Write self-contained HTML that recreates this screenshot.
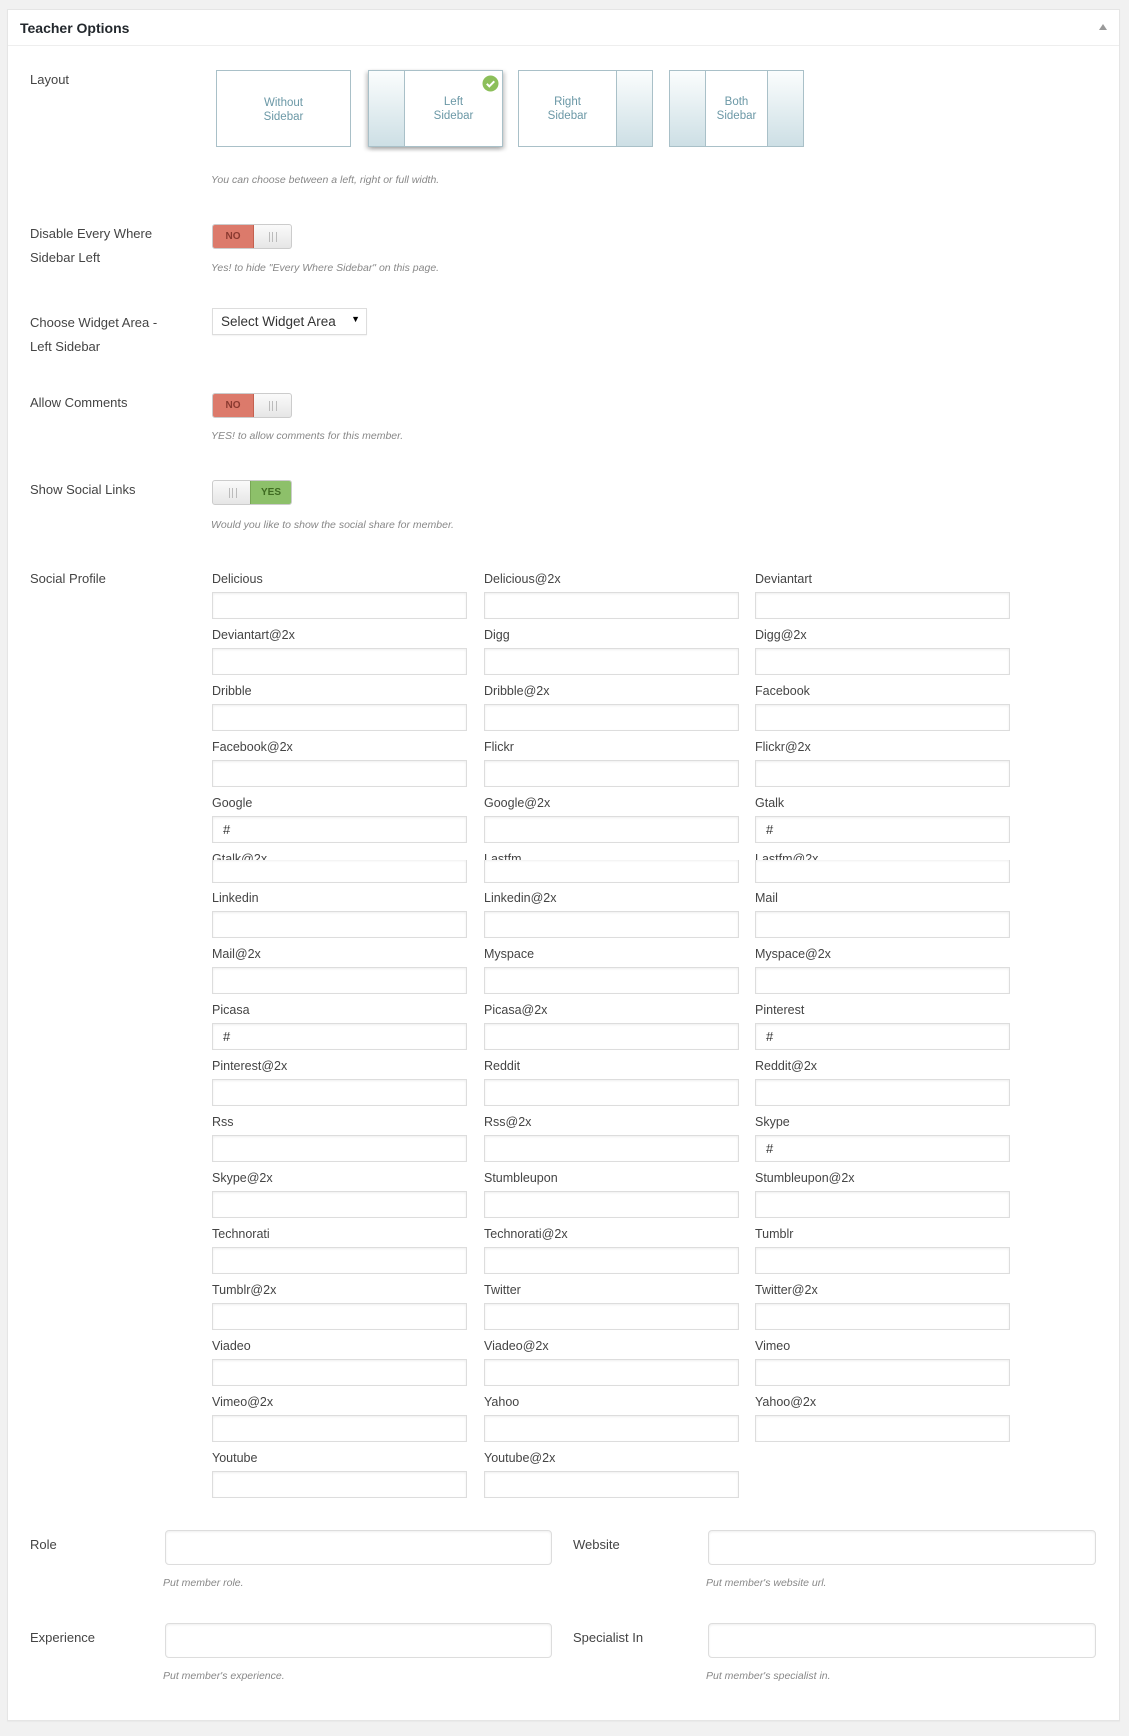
<!DOCTYPE html>
<html><head><meta charset="utf-8">
<style>
*{box-sizing:border-box;margin:0;padding:0}
body{width:1129px;height:1736px;background:#f1f1f1;font-family:"Liberation Sans",sans-serif;position:relative;overflow:hidden;color:#444}
.panel{position:absolute;left:7px;top:9px;width:1113px;height:1712px;background:#fff;border:1px solid #e5e5e5;box-shadow:0 1px 1px rgba(0,0,0,.04)}
.hdr{position:absolute;left:0;top:0;width:100%;height:36px;border-bottom:1px solid #eee}
.hdr .t{position:absolute;left:12px;top:10px;font-size:14px;font-weight:bold;color:#23282d}
.hdr .a{position:absolute;right:12px;top:14px;width:0;height:0;border-left:4px solid transparent;border-right:4px solid transparent;border-bottom:6px solid #999}
.lbl{position:absolute;left:30px;font-size:13px;color:#444;line-height:24px}
.hint{position:absolute;font-size:10.5px;font-style:italic;color:#888}
.box{position:absolute;top:70px;width:135px;height:77px;border:1px solid #a9c0c8;background:#fff;font-size:11.5px;color:#6b98a6;text-align:center;line-height:14px}
.sb{position:absolute;top:0;bottom:0;width:36px;background:linear-gradient(#fbfdfd,#cddfe5)}
.box .tx{position:absolute;left:0;right:0;top:24px}
.tg{position:absolute;left:212px;width:80px;height:25px;border:1px solid #ccc;border-radius:3px;overflow:hidden;background:linear-gradient(#fafafa,#e6e6e6)}
.tg .no{position:absolute;left:0;top:0;width:41px;height:100%;background:#dc7a6b;border-right:1px solid #c4604f;font-size:10px;font-weight:bold;text-align:center;line-height:24px;color:#8a3a30}
.tg .yes{position:absolute;right:0;top:0;width:41px;height:100%;background:#8dc06a;border-left:1px solid #78a656;font-size:10px;font-weight:bold;text-align:center;line-height:24px;color:#3f6b22}
.tg .k{position:absolute;top:7px;width:8px;height:10px;border-left:1px solid #bbb;border-right:1px solid #bbb}
.tg .k:after{content:"";position:absolute;left:2px;top:0;height:10px;border-left:1px solid #bbb}
.c{position:absolute;width:255px;height:50px}
.c span{position:absolute;left:0;top:0;font-size:12.5px;line-height:16px;color:#444}
.c i{position:absolute;left:0;top:21px;width:255px;height:27px;border:1px solid #ddd;box-shadow:inset 0 1px 2px rgba(0,0,0,.07);background:#fff;font-style:normal;font-size:13px;color:#333;padding:5px 10px}
.bi{position:absolute;height:35px;border:1px solid #ddd;border-radius:4px;box-shadow:inset 0 1px 2px rgba(0,0,0,.07);background:#fff}
</style></head><body>
<div class="panel">
<div class="hdr"><div class="t">Teacher Options</div><div class="a"></div></div>
</div>

<div class="lbl" style="top:68px">Layout</div>
<div class="box" style="left:216px"><div class="tx" style="top:25px">Without<br>Sidebar</div></div>
<div class="box" style="left:368px;box-shadow:-2px 2px 4px rgba(0,0,0,.2),2px 2px 4px rgba(0,0,0,.2)"><div class="sb" style="left:0;border-right:1px solid #a9c0c8"></div><div class="tx" style="left:36px">Left<br>Sidebar</div>
<svg style="position:absolute;left:113px;top:4px" width="17" height="17" viewBox="0 0 17 17"><circle cx="8.5" cy="8.5" r="8" fill="#8cbf5a"/><path d="M4.8 8.8l2.5 2.5 5-5" stroke="#fff" stroke-width="2" fill="none"/></svg></div>
<div class="box" style="left:518px"><div class="sb" style="right:0;border-left:1px solid #a9c0c8"></div><div class="tx" style="right:36px">Right<br>Sidebar</div></div>
<div class="box" style="left:669px"><div class="sb" style="left:0;border-right:1px solid #a9c0c8"></div><div class="sb" style="right:0;border-left:1px solid #a9c0c8"></div><div class="tx">Both<br>Sidebar</div></div>
<div class="hint" style="left:211px;top:174px">You can choose between a left, right or full width.</div>

<div class="lbl" style="top:222px">Disable Every Where<br>Sidebar Left</div>
<div class="tg" style="top:224px"><div class="no">NO</div><div class="k" style="left:56px"></div></div>
<div class="hint" style="left:211px;top:262px">Yes! to hide "Every Where Sidebar" on this page.</div>

<div class="lbl" style="top:311px">Choose Widget Area -<br>Left Sidebar</div>
<div style="position:absolute;left:212px;top:308px;width:155px;height:27px;border:1px solid #ddd;background:#fff;font-size:13.5px;color:#333;padding:5px 8px;box-shadow:0 1px 1px rgba(0,0,0,.05)">Select Widget Area<span style="position:absolute;right:6px;top:5px;font-size:9px;color:#000">▼</span></div>

<div class="lbl" style="top:391px">Allow Comments</div>
<div class="tg" style="top:393px"><div class="no">NO</div><div class="k" style="left:56px"></div></div>
<div class="hint" style="left:211px;top:430px">YES! to allow comments for this member.</div>

<div class="lbl" style="top:478px">Show Social Links</div>
<div class="tg" style="top:480px"><div class="yes">YES</div><div class="k" style="left:16px"></div></div>
<div class="hint" style="left:211px;top:519px">Would you like to show the social share for member.</div>

<div class="lbl" style="top:567px">Social Profile</div>

<div class="c" style="left:212px;top:571px"><span>Delicious</span><i></i></div>
<div class="c" style="left:484px;top:571px"><span>Delicious@2x</span><i></i></div>
<div class="c" style="left:755px;top:571px"><span>Deviantart</span><i></i></div>
<div class="c" style="left:212px;top:627px"><span>Deviantart@2x</span><i></i></div>
<div class="c" style="left:484px;top:627px"><span>Digg</span><i></i></div>
<div class="c" style="left:755px;top:627px"><span>Digg@2x</span><i></i></div>
<div class="c" style="left:212px;top:683px"><span>Dribble</span><i></i></div>
<div class="c" style="left:484px;top:683px"><span>Dribble@2x</span><i></i></div>
<div class="c" style="left:755px;top:683px"><span>Facebook</span><i></i></div>
<div class="c" style="left:212px;top:739px"><span>Facebook@2x</span><i></i></div>
<div class="c" style="left:484px;top:739px"><span>Flickr</span><i></i></div>
<div class="c" style="left:755px;top:739px"><span>Flickr@2x</span><i></i></div>
<div class="c" style="left:212px;top:795px"><span>Google</span><i>#</i></div>
<div class="c" style="left:484px;top:795px"><span>Google@2x</span><i></i></div>
<div class="c" style="left:755px;top:795px"><span>Gtalk</span><i>#</i></div>
<div class="c" style="left:212px;top:851px"><span>Gtalk@2x</span><i style="top:9px;height:23px;border-top:none"></i></div>
<div class="c" style="left:484px;top:851px"><span>Lastfm</span><i style="top:9px;height:23px;border-top:none"></i></div>
<div class="c" style="left:755px;top:851px"><span>Lastfm@2x</span><i style="top:9px;height:23px;border-top:none"></i></div>
<div class="c" style="left:212px;top:890px"><span>Linkedin</span><i></i></div>
<div class="c" style="left:484px;top:890px"><span>Linkedin@2x</span><i></i></div>
<div class="c" style="left:755px;top:890px"><span>Mail</span><i></i></div>
<div class="c" style="left:212px;top:946px"><span>Mail@2x</span><i></i></div>
<div class="c" style="left:484px;top:946px"><span>Myspace</span><i></i></div>
<div class="c" style="left:755px;top:946px"><span>Myspace@2x</span><i></i></div>
<div class="c" style="left:212px;top:1002px"><span>Picasa</span><i>#</i></div>
<div class="c" style="left:484px;top:1002px"><span>Picasa@2x</span><i></i></div>
<div class="c" style="left:755px;top:1002px"><span>Pinterest</span><i>#</i></div>
<div class="c" style="left:212px;top:1058px"><span>Pinterest@2x</span><i></i></div>
<div class="c" style="left:484px;top:1058px"><span>Reddit</span><i></i></div>
<div class="c" style="left:755px;top:1058px"><span>Reddit@2x</span><i></i></div>
<div class="c" style="left:212px;top:1114px"><span>Rss</span><i></i></div>
<div class="c" style="left:484px;top:1114px"><span>Rss@2x</span><i></i></div>
<div class="c" style="left:755px;top:1114px"><span>Skype</span><i>#</i></div>
<div class="c" style="left:212px;top:1170px"><span>Skype@2x</span><i></i></div>
<div class="c" style="left:484px;top:1170px"><span>Stumbleupon</span><i></i></div>
<div class="c" style="left:755px;top:1170px"><span>Stumbleupon@2x</span><i></i></div>
<div class="c" style="left:212px;top:1226px"><span>Technorati</span><i></i></div>
<div class="c" style="left:484px;top:1226px"><span>Technorati@2x</span><i></i></div>
<div class="c" style="left:755px;top:1226px"><span>Tumblr</span><i></i></div>
<div class="c" style="left:212px;top:1282px"><span>Tumblr@2x</span><i></i></div>
<div class="c" style="left:484px;top:1282px"><span>Twitter</span><i></i></div>
<div class="c" style="left:755px;top:1282px"><span>Twitter@2x</span><i></i></div>
<div class="c" style="left:212px;top:1338px"><span>Viadeo</span><i></i></div>
<div class="c" style="left:484px;top:1338px"><span>Viadeo@2x</span><i></i></div>
<div class="c" style="left:755px;top:1338px"><span>Vimeo</span><i></i></div>
<div class="c" style="left:212px;top:1394px"><span>Vimeo@2x</span><i></i></div>
<div class="c" style="left:484px;top:1394px"><span>Yahoo</span><i></i></div>
<div class="c" style="left:755px;top:1394px"><span>Yahoo@2x</span><i></i></div>
<div class="c" style="left:212px;top:1450px"><span>Youtube</span><i></i></div>
<div class="c" style="left:484px;top:1450px"><span>Youtube@2x</span><i></i></div>

<div class="lbl" style="top:1533px">Role</div>
<div class="bi" style="left:165px;top:1530px;width:387px"></div>
<div class="lbl" style="top:1533px;left:573px">Website</div>
<div class="bi" style="left:708px;top:1530px;width:388px"></div>
<div class="hint" style="left:163px;top:1577px">Put member role.</div>
<div class="hint" style="left:706px;top:1577px">Put member's website url.</div>

<div class="lbl" style="top:1626px">Experience</div>
<div class="bi" style="left:165px;top:1623px;width:387px"></div>
<div class="lbl" style="top:1626px;left:573px">Specialist In</div>
<div class="bi" style="left:708px;top:1623px;width:388px"></div>
<div class="hint" style="left:163px;top:1670px">Put member's experience.</div>
<div class="hint" style="left:706px;top:1670px">Put member's specialist in.</div>
</body></html>
